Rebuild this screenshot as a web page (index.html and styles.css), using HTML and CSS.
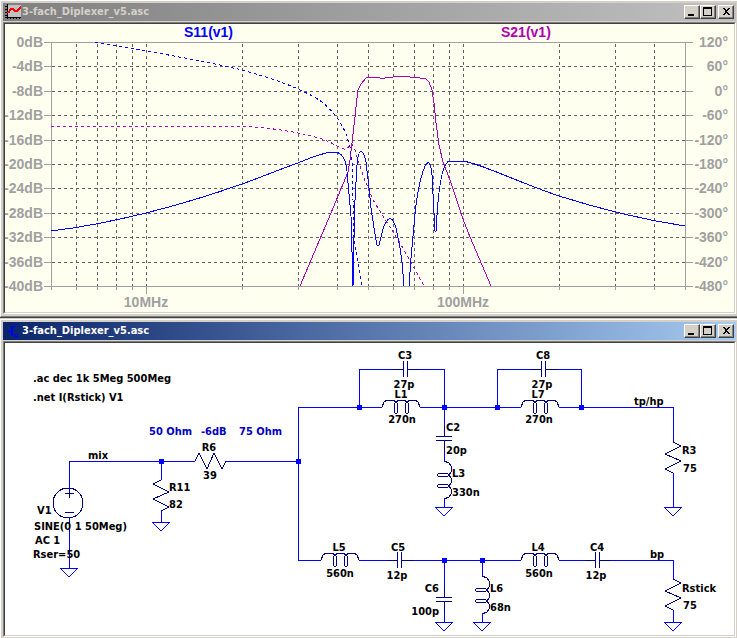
FILE: index.html
```html
<!DOCTYPE html>
<html lang="en">
<head>
  <meta charset="UTF-8">
  <meta name="viewport" content="width=device-width, initial-scale=1.0">
  <title>3-fach_Diplexer_v5</title>
  <link rel="stylesheet" href="styles.css">
</head>
<body>

  <section class="window plot-window">
    <header class="titlebar">
      <svg class="icon" viewBox="0 0 16 16" width="16" height="16">
        <rect x="2" y="1" width="14" height="12" fill="#c0c0c0"/>
        <path d="M2 0V15M0 13H16M0 2H2M0 5H2M0 8H2M0 11H2M5 13V15M8 13V15M11 13V15M14 13V15" stroke="#000"/>
        <path d="M3 9L6 5H8L10 7H12L16 3" fill="none" stroke="#f00" stroke-width="2"/>
      </svg>
      <h1>3-fach_Diplexer_v5.asc</h1>
      <div class="buttons">
        <button type="button" aria-label="Minimize"><svg viewBox="0 0 12 10"><path d="M2 7H8V9H2Z"/></svg></button>
        <button type="button" aria-label="Maximize"><svg viewBox="0 0 12 10"><path fill-rule="evenodd" d="M1 0H10V9H1ZM2 2V8H9V2Z"/></svg></button>
        <button type="button" class="close" aria-label="Close"><svg viewBox="0 0 12 10"><path d="M2 1H4L6 3L8 1H10L7 4V5L10 8H8L6 6L4 8H2L5 5V4Z"/></svg></button>
      </div>
    </header>
    <div class="client">
      <svg class="plot" viewBox="5 24 729 288">
        <!-- grid -->
        <g class="grid">
          <path d="M52 66H685M52 91H685M52 115H685M52 140H685M52 164H685M52 188H685M52 213H685M52 237H685M52 262H685"/>
          <path d="M76 44V286M97 44V286M116 44V286M132 44V286M146 44V286M242 44V286M298 44V286M337 44V286M368 44V286M393 44V286M414 44V286M433 44V286M449 44V286M463 44V286M559 44V286M615 44V286M654 44V286"/>
        </g>
        <!-- axes and ticks -->
        <g class="axis">
          <path d="M44 42H693M44 286H693M51 42V290M685 42V290"/>
          <path d="M44 66H51M44 91H51M44 115H51M44 140H51M44 164H51M44 188H51M44 213H51M44 237H51M44 262H51"/>
          <path d="M685 66H693M685 91H693M685 115H693M685 140H693M685 164H693M685 188H693M685 213H693M685 237H693M685 262H693"/>
          <path d="M76 286V290M97 286V290M116 286V290M132 286V290M146 286V294M242 286V290M298 286V290M337 286V290M368 286V290M393 286V290M414 286V290M433 286V290M449 286V290M463 286V294M559 286V290M615 286V290M654 286V290"/>
        </g>
        <!-- traces -->
        <g class="trace s21">
          <path class="phase" d="M51 126H235C270 127 305 133 325 140C335 144 342 150 346 149L352 144L355 150L358 160L364 178L373 200L386 221L400 243L412 264L424 286"/>
          <path d="M300 286L331 213L348 172L350 160L352 143L355 117L357 98L358 90L361 84L366 78L369 77H377L380 78H385L393 77L396 76H402L410 77L420 78H425L429 82L432 90L434 103L436 123L439 145L443 162L450 180L463 219L470 237L491 286"/>
        </g>
        <g class="trace s11">
          <path class="phase" d="M95 42C146 51 200 60 242 70C270 78 300 87 322 102C338 115 346 130 350 147L352 160L353 200L354 240L358 264L362 286"/>
          <path d="M51 231C110 224 180 206 242 184C262 177 280 169 298 163C312 157 325 152 334 152C345 152 347 164 348 183L351 216L353 286L354 238L355 200L357 165C358 148 363 147 366 162L369 188L371 208L374 228L376 240L377 245H379L381 237C385 219 391 211 396 228L400 248L402 262L404 286M409 286L411 258L414 225C416 200 420 178 425 166C429 159 431 164 432 175L435 231H436L437 215C439 185 443 161 450 161H461C475 161 520 183 559 196C600 209 645 220 685 226"/>
        </g>
        <!-- labels -->
        <text class="s11-label" x="184" y="37">S11(v1)</text>
        <text class="s21-label" x="501" y="37">S21(v1)</text>
        <g class="scale end">
          <text x="43" y="47">0dB</text>
          <text x="43" y="71">-4dB</text>
          <text x="43" y="96">-8dB</text>
          <text x="43" y="120">-12dB</text>
          <text x="43" y="145">-16dB</text>
          <text x="43" y="169">-20dB</text>
          <text x="43" y="193">-24dB</text>
          <text x="43" y="218">-28dB</text>
          <text x="43" y="242">-32dB</text>
          <text x="43" y="267">-36dB</text>
          <text x="43" y="291">-40dB</text>
        </g>
        <g class="scale end">
          <text x="728" y="47">120°</text>
          <text x="728" y="71">60°</text>
          <text x="728" y="96">0°</text>
          <text x="728" y="120">-60°</text>
          <text x="728" y="145">-120°</text>
          <text x="728" y="169">-180°</text>
          <text x="728" y="193">-240°</text>
          <text x="728" y="218">-300°</text>
          <text x="728" y="242">-360°</text>
          <text x="728" y="267">-420°</text>
          <text x="728" y="291">-480°</text>
        </g>
        <g class="scale mid">
          <text x="146" y="307">10MHz</text>
          <text x="463" y="307">100MHz</text>
        </g>
      </svg>
    </div>
  </section>

  <section class="window schematic-window active">
    <header class="titlebar">
      <svg class="icon" viewBox="0 0 16 16" width="16" height="16">
        <path d="M6 3V13M7 3V13M2 8H6M7 6L12 1M7 9L12 14M9 13H13M12 11V15" fill="none" stroke="#00f"/>
      </svg>
      <h1>3-fach_Diplexer_v5.asc</h1>
      <div class="buttons">
        <button type="button" aria-label="Minimize"><svg viewBox="0 0 12 10"><path d="M2 7H8V9H2Z"/></svg></button>
        <button type="button" aria-label="Maximize"><svg viewBox="0 0 12 10"><path fill-rule="evenodd" d="M1 0H10V9H1ZM2 2V8H9V2Z"/></svg></button>
        <button type="button" class="close" aria-label="Close"><svg viewBox="0 0 12 10"><path d="M2 1H4L6 3L8 1H10L7 4V5L10 8H8L6 6L4 8H2L5 5V4Z"/></svg></button>
      </div>
    </header>
    <div class="client">
      <svg class="schematic" viewBox="5 343 729 292">
        <defs>
          <path id="ground" d="M-9 0H9L0 9Z"/>
          <path id="resistor" d="M0 0L8 4L-8 12L8 19L-8 27L0 31"/>
          <g id="coil">
            <path d="M0 0L2-5L5-7H11L14-5L17-7H22L25-5L28-7H33L36-5L38 0"/>
            <ellipse cx="14" cy="1" rx="2" ry="6"/>
            <ellipse cx="25" cy="1" rx="2" ry="6"/>
          </g>
          <path id="cap" d="M-12 0H-2M-2-8V8M2-8V8M2 0H14"/>
          <rect id="node" x="-2" y="-2" width="5" height="5"/>
        </defs>

        <!-- wires -->
        <g class="wire">
          <path d="M69 490V461H195M226 461H298M161 461V480M161 511V522M69 518V568"/>
          <path d="M382 407H298V560H321M359 407V369H393M419 369H444V407M420 407H521"/>
          <path d="M497 407V369H531M557 369H581V407M559 407H673V442M673 473V507"/>
          <path d="M444 407V426M444 452V461M444 499V507"/>
          <path d="M359 560H387M413 560H521M444 560V587M444 613V622M482 560V576M482 614V622"/>
          <path d="M559 560H585M611 560H673V579M673 610V622"/>
          <use href="#ground" x="69" y="568"/>
          <use href="#ground" x="161" y="522"/>
          <use href="#ground" x="444" y="507"/>
          <use href="#ground" x="673" y="507"/>
          <use href="#ground" x="444" y="622"/>
          <use href="#ground" x="482" y="622"/>
          <use href="#ground" x="673" y="622"/>
        </g>
        <g class="nodes">
          <use href="#node" x="161" y="461"/>
          <use href="#node" x="298" y="461"/>
          <use href="#node" x="359" y="407"/>
          <use href="#node" x="444" y="407"/>
          <use href="#node" x="497" y="407"/>
          <use href="#node" x="581" y="407"/>
          <use href="#node" x="444" y="560"/>
          <use href="#node" x="482" y="560"/>
        </g>

        <!-- parts -->
        <g class="part">
          <circle cx="68" cy="503" r="15"/>
          <path d="M69 488V498M65 493H74M65 512H74"/>
          <use href="#resistor" transform="translate(195 461) rotate(-90)"/>
          <use href="#resistor" transform="translate(161 480) scale(-1 1)"/>
          <use href="#resistor" x="673" y="442"/>
          <use href="#resistor" x="673" y="579"/>
          <use href="#coil" x="382" y="407"/>
          <use href="#coil" x="521" y="407"/>
          <use href="#coil" x="321" y="560"/>
          <use href="#coil" x="521" y="560"/>
          <use href="#coil" transform="translate(444 461) rotate(90)"/>
          <use href="#coil" transform="translate(482 576) rotate(90)"/>
          <use href="#cap" x="405" y="369"/>
          <use href="#cap" x="543" y="369"/>
          <use href="#cap" x="399" y="560"/>
          <use href="#cap" x="597" y="560"/>
          <use href="#cap" transform="translate(444 438) rotate(90)"/>
          <use href="#cap" transform="translate(444 599) rotate(90)"/>
        </g>

        <!-- texts -->
        <g class="label">
          <text x="33" y="382">.ac dec 1k 5Meg 500Meg</text>
          <text x="33" y="401">.net I(Rstick) V1</text>
          <text x="88" y="459">mix</text>
          <text x="37" y="514">V1</text>
          <text x="34" y="530">SINE(0 1 50Meg)</text>
          <text x="35" y="544">AC 1</text>
          <text x="33" y="558">Rser=50</text>
          <text x="169" y="491">R11</text>
          <text x="169" y="508">82</text>
          <text x="446" y="431">C2</text>
          <text x="446" y="454">20p</text>
          <text x="452" y="477">L3</text>
          <text x="452" y="496">330n</text>
          <text x="634" y="405">tp/hp</text>
          <text x="682" y="454">R3</text>
          <text x="683" y="472">75</text>
          <text x="490" y="592">L6</text>
          <text x="490" y="611">68n</text>
          <text x="650" y="558">bp</text>
          <text x="682" y="592">Rstick</text>
          <text x="683" y="609">75</text>
        </g>
        <g class="label mid">
          <text x="209" y="451">R6</text>
          <text x="210" y="479">39</text>
          <text x="405" y="359">C3</text>
          <text x="404" y="388">27p</text>
          <text x="401" y="398">L1</text>
          <text x="402" y="423">270n</text>
          <text x="543" y="359">C8</text>
          <text x="542" y="388">27p</text>
          <text x="538" y="398">L7</text>
          <text x="539" y="423">270n</text>
          <text x="339" y="551">L5</text>
          <text x="340" y="577">560n</text>
          <text x="398" y="551">C5</text>
          <text x="397" y="579">12p</text>
          <text x="538" y="551">L4</text>
          <text x="539" y="577">560n</text>
          <text x="597" y="551">C4</text>
          <text x="596" y="579">12p</text>
        </g>
        <g class="label end">
          <text x="439" y="592">C6</text>
          <text x="439" y="615">100p</text>
        </g>
        <g class="label note">
          <text x="149" y="435">50 Ohm</text>
          <text x="201" y="435">-6dB</text>
          <text x="239" y="435">75 Ohm</text>
        </g>
      </svg>
    </div>
  </section>

</body>
</html>
```

FILE: styles.css
```css
* {
  box-sizing: border-box;
  margin: 0;
  padding: 0;
}

body {
  background-color: #d4d0c8;
  font-family: "DejaVu Sans Condensed", "DejaVu Sans", sans-serif;
  font-size: 11px;
}

.window {
  padding: 2px 1px 2px 2px;
  background-color: #d4d0c8;
  border-top: 1px solid #fff;
  border-left: 1px solid #fff;
}

.plot-window {
  border-bottom: 1px solid #808080;
  box-shadow: 0 1px 0 #404040;
}

.schematic-window {
  margin-top: 2px;
}

/* title bar */
.titlebar {
  display: flex;
  align-items: center;
  gap: 1px;
  height: 18px;
  padding: 0 2px;
  margin-bottom: 1px;
  color: #d4d0c8;
  background: linear-gradient(to right, #808080, #c0c0c0);
}

.active .titlebar {
  color: #fff;
  background: linear-gradient(to right, #0a246a, #a6caf0);
}

.titlebar h1 {
  flex: 1;
  font-size: 11px;
  line-height: 18px;
  font-weight: bold;
}

.icon {
  shape-rendering: crispEdges;
}

.buttons {
  display: flex;
}

.buttons button {
  width: 16px;
  height: 14px;
  background-color: #d4d0c8;
  border: 1px solid;
  border-color: #fff #404040 #404040 #fff;
  box-shadow: inset -1px -1px 0 #808080;
}

.buttons .close {
  margin-left: 2px;
}

.buttons svg {
  display: block;
  width: 12px;
  height: 10px;
  margin: 1px;
  shape-rendering: crispEdges;
}

/* sunken client area */
.client {
  border: 1px solid;
  border-color: #808080 #fff #fff #808080;
}

.plot,
.schematic {
  display: block;
  width: 100%;
  height: auto;
  border: 1px solid;
  border-color: #404040 #d4d0c8 #d4d0c8 #404040;
}

.plot {
  background-color: #fffff0;
}

.schematic {
  background-color: #fff;
}

path,
circle,
ellipse,
rect {
  shape-rendering: crispEdges;
}

/* plot */
.grid path {
  stroke: #606060;
  stroke-dasharray: 3 3;
}

.axis path {
  stroke: #a0a0a0;
}

.trace {
  fill: none;
}

.s11 {
  stroke: #00f;
}

.s21 {
  stroke: #b000b0;
}

.phase {
  stroke-dasharray: 3 3;
}

.plot text {
  font-family: "Liberation Sans", Arial, sans-serif;
  font-size: 14px;
  font-weight: bold;
}

.s11-label {
  fill: #00f;
}

.s21-label {
  fill: #b000b0;
}

.scale {
  fill: #a0a0a0;
}

.mid {
  text-anchor: middle;
}

.end {
  text-anchor: end;
}

/* schematic */
.wire {
  fill: none;
  stroke: #00f;
}

.nodes {
  fill: #00f;
}

.part {
  fill: none;
  stroke: #000080;
}

.label {
  font-size: 11px;
  font-weight: bold;
}

.note {
  fill: #0000c0;
}
```
